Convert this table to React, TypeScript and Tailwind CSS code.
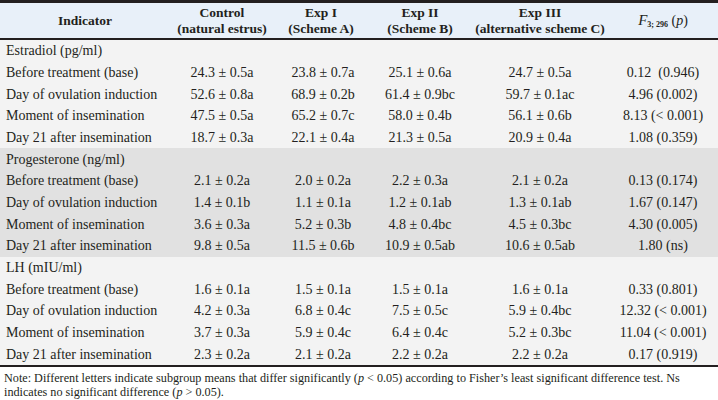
import React from "react";

type Row = [string, string, string, string, string, string];

const sections: { title: string; bg: string; rows: Row[] }[] = [
  {
    title: "Estradiol (pg/ml)",
    bg: "bg-[#f3f3f3]",
    rows: [
      ["Before treatment (base)", "24.3 ± 0.5a", "23.8 ± 0.7a", "25.1 ± 0.6a", "24.7 ± 0.5a", "0.12\u00a0 (0.946)"],
      ["Day of ovulation induction", "52.6 ± 0.8a", "68.9 ± 0.2b", "61.4 ± 0.9bc", "59.7 ± 0.1ac", "4.96 (0.002)"],
      ["Moment of insemination", "47.5 ± 0.5a", "65.2 ± 0.7c", "58.0 ± 0.4b", "56.1 ± 0.6b", "8.13 (< 0.001)"],
      ["Day 21 after insemination", "18.7 ± 0.3a", "22.1 ± 0.4a", "21.3 ± 0.5a", "20.9 ± 0.4a", "1.08 (0.359)"],
    ],
  },
  {
    title: "Progesterone (ng/ml)",
    bg: "bg-[#e1e1e1]",
    rows: [
      ["Before treatment (base)", "2.1 ± 0.2a", "2.0 ± 0.2a", "2.2 ± 0.3a", "2.1 ± 0.2a", "0.13 (0.174)"],
      ["Day of ovulation induction", "1.4 ± 0.1b", "1.1 ± 0.1a", "1.2 ± 0.1ab", "1.3 ± 0.1ab", "1.67 (0.147)"],
      ["Moment of insemination", "3.6 ± 0.3a", "5.2 ± 0.3b", "4.8 ± 0.4bc", "4.5 ± 0.3bc", "4.30 (0.005)"],
      ["Day 21 after insemination", "9.8 ± 0.5a", "11.5 ± 0.6b", "10.9 ± 0.5ab", "10.6 ± 0.5ab", "1.80 (ns)"],
    ],
  },
  {
    title: "LH (mIU/ml)",
    bg: "bg-[#f3f3f3]",
    rows: [
      ["Before treatment (base)", "1.6 ± 0.1a", "1.5 ± 0.1a", "1.5 ± 0.1a", "1.6 ± 0.1a", "0.33 (0.801)"],
      ["Day of ovulation induction", "4.2 ± 0.3a", "6.8 ± 0.4c", "7.5 ± 0.5c", "5.9 ± 0.4bc", "12.32 (< 0.001)"],
      ["Moment of insemination", "3.7 ± 0.3a", "5.9 ± 0.4c", "6.4 ± 0.4c", "5.2 ± 0.3bc", "11.04 (< 0.001)"],
      ["Day 21 after insemination", "2.3 ± 0.2a", "2.1 ± 0.2a", "2.2 ± 0.2a", "2.2 ± 0.2a", "0.17 (0.919)"],
    ],
  },
];

const cols = "grid grid-cols-[170px_104px_94px_104px_136px_110px]";

export default function App() {
  return (
    <div className="w-[718px] h-[400px] bg-white text-[#231f20] font-['Liberation_Serif',serif]">
      <div className="border-t-[3px] border-b-2 border-[#231f20] bg-[#e8f0f9]">
        <div className={`${cols} h-[35px] items-center text-[13.5px] font-bold leading-[16px] text-center`}>
          <div>Indicator</div>
          <div>
            <div>Control</div>
            <div>(natural estrus)</div>
          </div>
          <div>
            <div>Exp I</div>
            <div>(Scheme A)</div>
          </div>
          <div>
            <div>Exp II</div>
            <div>(Scheme B)</div>
          </div>
          <div>
            <div>Exp III</div>
            <div>(alternative scheme C)</div>
          </div>
          <div className="font-normal text-[14px]">
            <i className="text-[15px]">F</i>
            <sub className="text-[8px] font-bold not-italic">3; 296</sub> (<i>p</i>)
          </div>
        </div>
      </div>

      <div className="border-b-2 border-[#231f20] text-[14px]">
        {sections.map((s) => (
          <div key={s.title} className={s.bg}>
            <div className="h-[21.67px] flex items-center pl-[6px]">{s.title}</div>
            {s.rows.map((r) => (
              <div key={r[0]} className={`${cols} h-[21.67px] items-center`}>
                <div className="pl-[6px]">{r[0]}</div>
                <div className="text-center">{r[1]}</div>
                <div className="text-center pl-1">{r[2]}</div>
                <div className="text-center">{r[3]}</div>
                <div className="text-center">{r[4]}</div>
                <div className="text-center">{r[5]}</div>
              </div>
            ))}
          </div>
        ))}
      </div>

      <div className="pl-[4px] pt-[4px] text-[12.2px] leading-[14.3px] whitespace-nowrap">
        <div>
          Note: Different letters indicate subgroup means that differ significantly (<i>p</i> &lt; 0.05) according to
          Fisher’s least significant difference test. Ns
        </div>
        <div>
          indicates no significant difference (<i>p</i> &gt; 0.05).
        </div>
      </div>
    </div>
  );
}
